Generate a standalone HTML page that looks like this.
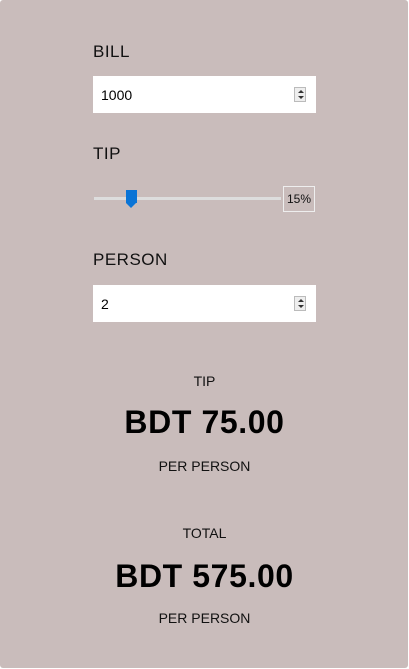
<!DOCTYPE html>
<html><head><style>
html,body{margin:0;padding:0;background:#fff;}
body{width:409px;height:669px;overflow:hidden;font-family:"Liberation Sans",sans-serif;}
.page{position:absolute;left:0;top:0;width:408px;height:668px;background:#c9bcbb;border-radius:3px;}
.lbl{position:absolute;left:93px;font-size:17px;color:#111;letter-spacing:0.5px;}
.inp{position:absolute;left:93px;width:223px;height:37px;background:#fff;}
.inp span{position:absolute;left:8px;top:11px;font-size:14px;color:#000;}
.spin{position:absolute;right:10px;top:11px;width:12px;height:15px;background:#eee;border:1px solid #bbb;box-sizing:border-box;}
.spin:before{content:"";position:absolute;left:3px;top:2px;border:3px solid transparent;border-bottom:3px solid #333;border-top:0;}
.spin:after{content:"";position:absolute;left:3px;bottom:2px;border:3px solid transparent;border-top:3px solid #333;border-bottom:0;}
.c{position:absolute;left:0;width:409px;text-align:center;color:#111;}
.s{font-size:14px;}
.b{font-size:32px;font-weight:bold;color:#000;letter-spacing:0.6px;}
</style></head><body><div class="page">
<div class="lbl" style="top:42px">BILL</div>
<div class="inp" style="top:76px"><span>1000</span><div class="spin"></div></div>
<div class="lbl" style="top:144px">TIP</div>
<div style="position:absolute;left:94px;top:197px;width:187px;height:3px;background:#ddd;"></div>
<div style="position:absolute;left:126px;top:190px;width:11px;height:13px;background:#0a74d6;"></div>
<div style="position:absolute;left:126px;top:203px;border-left:5.5px solid transparent;border-right:5.5px solid transparent;border-top:5px solid #0a74d6;"></div>
<div style="position:absolute;left:283px;top:186px;width:30px;height:24px;border:1px solid #eee;font-size:12px;line-height:24px;text-align:center;color:#111;">15%</div>
<div class="lbl" style="top:250px">PERSON</div>
<div class="inp" style="top:285px"><span>2</span><div class="spin"></div></div>
<div class="c s" style="top:373px">TIP</div>
<div class="c b" style="top:404px">BDT 75.00</div>
<div class="c s" style="top:458px">PER PERSON</div>
<div class="c s" style="top:525px">TOTAL</div>
<div class="c b" style="top:558px">BDT 575.00</div>
<div class="c s" style="top:610px">PER PERSON</div>
</div></body></html>
